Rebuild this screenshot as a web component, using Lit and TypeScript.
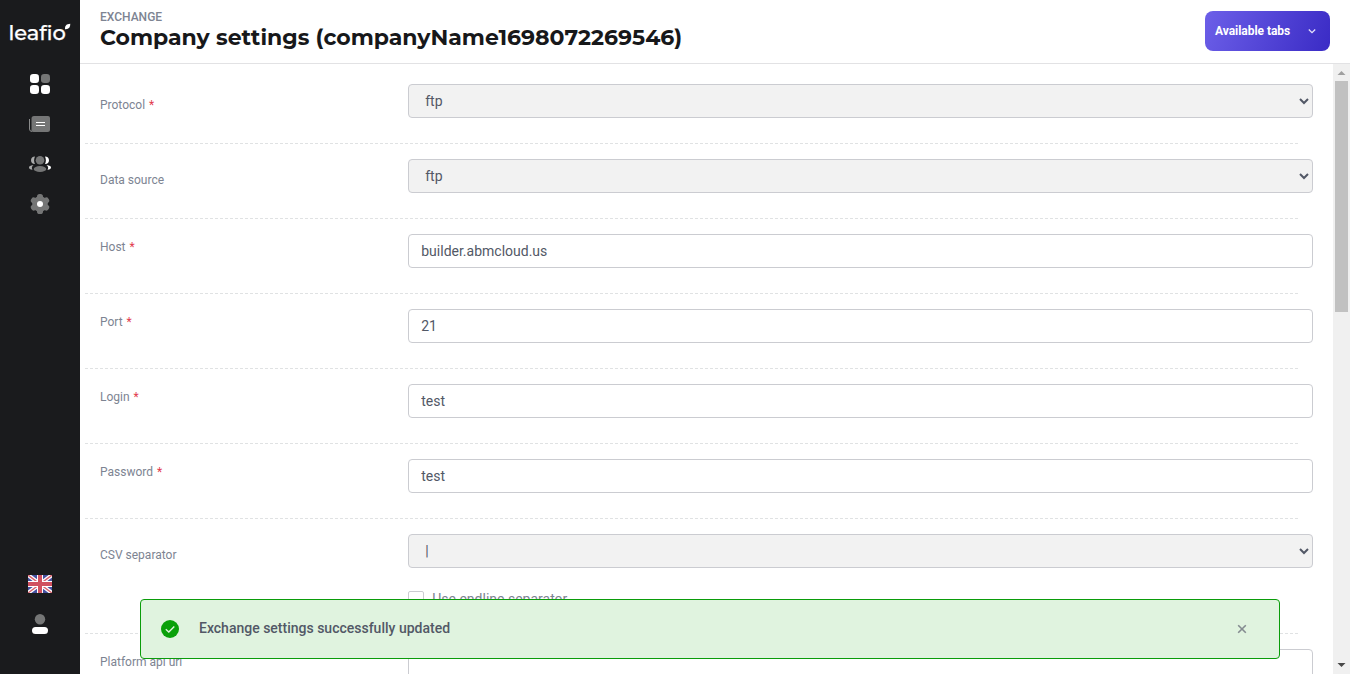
import { LitElement, html, svg, css, nothing } from "lit";
import { customElement, property } from "lit/decorators.js";

interface Field {
  label: string;
  required?: boolean;
  kind: "select" | "text";
  value: string;
  checkbox?: string;
}

const FIELDS: Field[] = [
  { label: "Protocol", required: true, kind: "select", value: "ftp" },
  { label: "Data source", kind: "select", value: "ftp" },
  { label: "Host", required: true, kind: "text", value: "builder.abmcloud.us" },
  { label: "Port", required: true, kind: "text", value: "21" },
  { label: "Login", required: true, kind: "text", value: "test" },
  { label: "Password", required: true, kind: "text", value: "test" },
  { label: "CSV separator", kind: "select", value: "|", checkbox: "Use endline separator" },
  { label: "Platform api url", kind: "text", value: "" },
];

@customElement("side-nav")
class SideNav extends LitElement {
  static styles = css`
    :host {
      display: flex;
      flex-direction: column;
      align-items: center;
      width: 80px;
      flex: none;
      box-sizing: border-box;
      padding: 16px 0 30px;
      background: #1a1b1d;
    }
    .logo { width: 64px; height: 32px; margin-bottom: 16px; }
    .logo text { font: 500 21px "Montserrat", "Lato", sans-serif; fill: #fff; stroke: #fff; stroke-width: 0.25px; font-variant-ligatures: common-ligatures; }
    .icon { width: 40px; height: 40px; display: block; }
    .space { flex: 1; }
  `;
  render() {
    return html`
      <svg class="logo" viewBox="8 16 64 32">
        <text x="8.400" y="40">leafio</text>
        <path fill="#fff" d="M65 29.200C64.800 25.600 66.400 24 70.300 23.800C70.400 27.600 68.600 29.600 65 29.200Z" />
      </svg>
      <svg class="icon" viewBox="20 64 40 40">
        <g fill="#fff">
          <rect x="30" y="74" width="9" height="9" rx="3.2" />
          <rect x="41" y="74" width="9" height="9" rx="3.2" fill="#757676" />
          <rect x="30" y="85" width="9" height="9" rx="3.2" />
          <rect x="41" y="85" width="9" height="9" rx="3.2" />
        </g>
      </svg>
      <svg class="icon" viewBox="20 104 40 40">
        <path d="M29.500 119V129Q29.500 131.500 32 131.500" fill="none" stroke="#8a8b8b" />
        <path d="M34 116H48Q50 116 50 118V129.500Q50 132 47.500 132H33.500Q31 132 31.500 129.500V118.500Q31.500 116 34 116Z" fill="#757676" />
        <path d="M36 122.500H45M36 125.500H45" stroke="#fff" stroke-width="1.200" />
      </svg>
      <svg class="icon" viewBox="20 144 40 40">
        <circle cx="40" cy="160.200" r="4.300" fill="#757676" />
        <ellipse cx="40" cy="169" rx="6.300" ry="3" fill="#757676" />
        <g fill="#a9aaaa">
          <path d="M35 156.400C33.800 158.800 33.800 161.800 35 164C32.300 164 31 162.300 31 160.200S32.500 156.400 35 156.400Z" />
          <path d="M33.500 165.300C31.500 166.500 31.500 168 32.500 169.700C30 169.700 29 168.500 29 167.500C29 166 31 165 33.500 165.300Z" />
        </g>
        <g fill="#fff">
          <path d="M45 156.400C46.200 158.800 46.200 161.800 45 164C47.700 164 49 162.300 49 160.200S47.500 156.400 45 156.400Z" />
          <path d="M46.500 165.300C48.500 166.500 48.500 168 47.500 169.700C50 169.700 51 168.500 51 167.500C51 166 49 165 46.500 165.300Z" />
        </g>
      </svg>
      <svg class="icon" viewBox="20 184 40 40">
        <circle cx="40" cy="204" r="7.800" fill="#757676" />
        ${[0, 60, 120, 180, 240, 300].map(
          (a) => svg`<rect x="37" y="194" width="6" height="7" rx="2.600" fill="#757676" transform="rotate(${a} 40 204)" />`
        )}
        <circle cx="40" cy="204" r="3" fill="#fff" />
      </svg>
      <div class="space"></div>
      <svg class="icon" viewBox="20 564 40 40">
        <svg x="28" y="575" width="24" height="18" viewBox="0 0 24 18">
          <rect width="24" height="18" fill="#4550a0" />
          <path d="M0 0L24 18M24 0L0 18" stroke="#fff" stroke-width="4" />
          <path d="M0 0L24 18M24 0L0 18" stroke="#d8606c" stroke-width="1.400" />
          <path d="M12 0V18M0 9H24" stroke="#fff" stroke-width="6" />
          <path d="M12 0V18M0 9H24" stroke="#d0505f" stroke-width="4" />
        </svg>
      </svg>
      <svg class="icon" viewBox="20 604 40 40">
        <circle cx="40" cy="619.300" r="5.200" fill="#757676" />
        <rect x="32" y="627" width="16" height="7" rx="3.500" fill="#fff" />
      </svg>
    `;
  }
}

@customElement("form-row")
class FormRow extends LitElement {
  @property({ attribute: false }) field!: Field;
  static styles = css`
    :host { display: block; }
    .row {
      display: flex;
      align-items: flex-start;
      box-sizing: border-box;
      width: 1213px;
      height: 75px;
      padding: 15px 0 0 15px;
      border-bottom: 1px dashed #e0e2e3;
    }
    .tall { height: 115px; }
    .label {
      flex: none;
      width: 308.25px;
      padding-top: 4px;
      font-size: 12px;
      line-height: 18px;
      color: #7d8492;
    }
    .low { padding-top: 12px; }
    .star { color: #e23b4e; margin-left: 1px; }
    .body { flex: none; width: 904.5px; }
    .control {
      display: block;
      box-sizing: border-box;
      width: 100%;
      height: 34px;
      margin: 0;
      padding: 0 12px;
      border: 1px solid #cbccd1;
      border-radius: 4px;
      background: #fff;
      color: #525866;
      font: 14px Roboto, sans-serif;
      outline: none;
    }
    .select { background: #f2f2f2; }
    .check { display: flex; align-items: center; gap: 8px; margin-top: 21px; font-size: 14px; line-height: 20px; color: #7d8492; }
    .box { box-sizing: border-box; width: 16px; height: 16px; border: 1px solid #cbccd1; border-radius: 2px; background: #fff; }
  `;
  render() {
    const f = this.field;
    const isSelect = f.kind === "select";
    return html`
      <div class="row ${f.checkbox ? "tall" : ""}">
        <label class="label ${isSelect ? "low" : ""}">${f.label}${f.required ? html`<span class="star"> *</span>` : nothing}</label>
        <div class="body">
          ${isSelect
            ? html`<select class="control select"><option>${f.value}</option></select>`
            : html`<input class="control" type="text" .value=${f.value} />`}
          ${f.checkbox ? html`<div class="check"><span class="box"></span><span>${f.checkbox}</span></div>` : nothing}
        </div>
      </div>
    `;
  }
}

@customElement("app-root")
class AppRoot extends LitElement {
  static styles = css`
    :host {
      display: flex;
      position: relative;
      width: 100%;
      height: 100vh;
      overflow: hidden;
      background: #fff;
      font-family: Roboto, sans-serif;
    }
    .main { flex: 1; min-width: 0; display: flex; flex-direction: column; }
    .header {
      flex: none;
      display: flex;
      justify-content: space-between;
      align-items: flex-start;
      box-sizing: border-box;
      height: 64px;
      padding: 11px 20px 0;
      border-bottom: 1px solid #e2e2e4;
    }
    .crumb { font-size: 12px; font-weight: 500; line-height: 12px; color: #7d8492; }
    .title { margin: 0; font: 700 22px/30px "Montserrat", "Inter", sans-serif; color: #17181a; white-space: nowrap; }
    .tabs {
      display: flex;
      align-items: center;
      justify-content: space-between;
      box-sizing: border-box;
      width: 125px;
      height: 40px;
      padding: 0 13px 0 10px;
      border: 0;
      border-radius: 8px;
      background: linear-gradient(110deg, #6c5fe8 0%, #3a2bc5 100%);
      color: #fff;
      font: 700 12px Roboto, sans-serif;
      letter-spacing: -0.04px;
    }
    .chevron { width: 10px; height: 8px; }
    .content { flex: 1; min-height: 0; display: flex; }
    .form { flex: 1; min-width: 0; overflow: hidden; padding: 5px 0 0 5px; }
    .scroll { flex: none; display: flex; flex-direction: column; align-items: center; width: 17px; background: #f0f0f0; }
    .arrow { width: 17px; height: 17px; flex: none; }
    .thumb { width: 13px; height: 231px; background: #c1c1c1; }
    .rest { flex: 1; }
    .toast {
      position: absolute;
      left: 140px;
      right: 70px;
      bottom: 15px;
      height: 60px;
      box-sizing: border-box;
      display: flex;
      align-items: center;
      padding: 0 32px 0 20px;
      border: 1px solid #0a9c0a;
      border-radius: 4px;
      background: #e0f3df;
      color: #525866;
      font-size: 14px;
      font-weight: 500;
    }
    .ok { width: 18px; height: 18px; margin-right: 20px; }
    .message { flex: 1; padding-bottom: 2px; }
    .close { width: 10px; height: 10px; }
  `;
  render() {
    return html`
      <side-nav></side-nav>
      <div class="main">
        <header class="header">
          <div>
            <div class="crumb">EXCHANGE</div>
            <h1 class="title">Company settings (companyName1698072269546)</h1>
          </div>
          <button class="tabs">
            <span>Available tabs</span>
            <svg class="chevron" viewBox="0 0 10 8"><path d="M1.800 2.500L5 5.700L8.200 2.500" fill="none" stroke="#e4e1fb" stroke-width="1.300" /></svg>
          </button>
        </header>
        <div class="content">
          <div class="form">${FIELDS.map((f) => html`<form-row .field=${f}></form-row>`)}</div>
          <div class="scroll">
            <svg class="arrow" viewBox="0 0 17 17"><path d="M4.500 11L8.500 7L12.500 11Z" fill="#a0a0a0" /></svg>
            <div class="thumb"></div>
            <div class="rest"></div>
            <svg class="arrow" viewBox="0 0 17 17"><path d="M4.500 6L8.500 10L12.500 6Z" fill="#484848" /></svg>
          </div>
        </div>
      </div>
      <div class="toast">
        <svg class="ok" viewBox="0 0 18 18">
          <circle cx="9" cy="9" r="9" fill="#0aa00a" />
          <path d="M4.800 9.300L7.800 12L13.300 6.500" fill="none" stroke="#e0f3df" stroke-width="1.400" />
        </svg>
        <span class="message">Exchange settings successfully updated</span>
        <svg class="close" viewBox="0 0 10 10"><path d="M1.200 1.200L8.800 8.800M8.800 1.200L1.200 8.800" stroke="#848b90" stroke-width="1.600" /></svg>
      </div>
    `;
  }
}
